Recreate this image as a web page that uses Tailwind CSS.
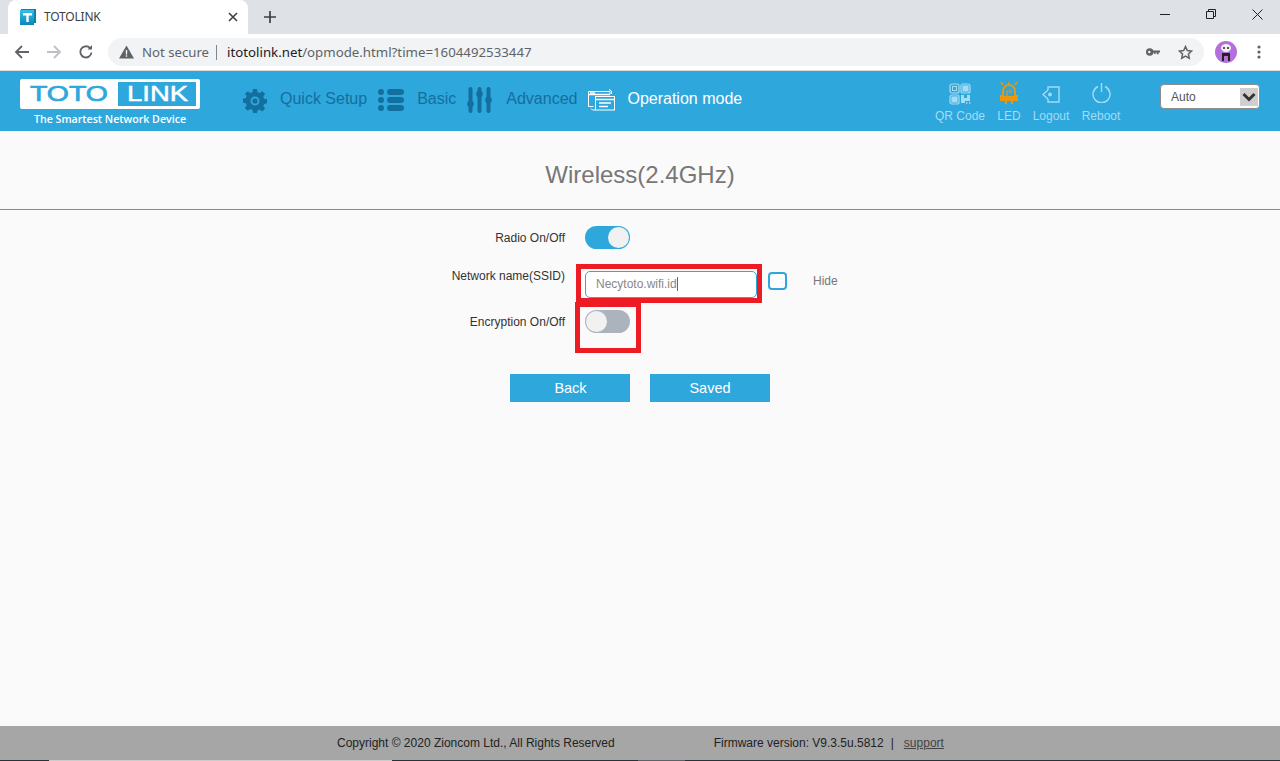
<!DOCTYPE html>
<html lang="en">
<head>
    <meta charset="UTF-8">
    <meta name="viewport" content="width=device-width, initial-scale=1.0">
    <title>TOTOLINK</title>
    <script src="https://cdn.jsdelivr.net/npm/@tailwindcss/browser@4"></script>
</head>
<body class="w-[1280px] h-[761px] overflow-hidden flex flex-col bg-[#fafafa] font-['Liberation_Sans',sans-serif]">

    <!-- browser tab strip -->
    <div class="h-[34px] bg-[#dee1e6] flex items-end pl-2 font-['Noto_Sans',sans-serif]">
        <div class="w-[240px] h-[34px] bg-white rounded-t-lg flex items-center pl-3 pr-[10px]">
            <svg class="w-4 h-4" viewBox="0 0 16 16">
                <defs><linearGradient id="fav" x1="0" y1="0" x2="0" y2="1"><stop offset="0" stop-color="#35c0e8"/><stop offset="1" stop-color="#0b86b8"/></linearGradient></defs>
                <rect x="1" y="0" width="15" height="14" fill="#0c7fae"/>
                <rect x="0" y="1" width="14" height="15" fill="url(#fav)"/>
                <path d="M3 4h9v2.400H8.700V13H6.300V6.400H3z" fill="#fff"/>
            </svg>
            <span class="ml-2 text-[12px] text-[#3c4043] tracking-[-0.2px]">TOTOLINK</span>
            <svg class="w-[10px] h-[10px] ml-auto" viewBox="0 0 10 10" stroke="#3c4043" stroke-width="1.6"><path d="M1 1l8 8M9 1l-8 8"/></svg>
        </div>
        <svg class="w-3 h-3 ml-[16px] mb-[11px]" viewBox="0 0 12 12" stroke="#3c4043" stroke-width="1.7"><path d="M6 0v12M0 6h12"/></svg>
        <div class="ml-auto flex items-center h-[34px] mb-[3px]">
            <svg class="w-[10px] h-[10px] mr-[36px]" viewBox="0 0 10 10" stroke="#202124"><path d="M0 5.5h10"/></svg>
            <svg class="w-[10px] h-[10px] mr-[36px]" viewBox="0 0 10 10" fill="none" stroke="#202124"><path d="M2.5 2.5V.5h7v7h-2M.5 2.5h7v7h-7z"/></svg>
            <svg class="w-[11px] h-[11px] mr-[17px]" viewBox="0 0 11 11" stroke="#202124"><path d="M.5.5l10 10M10.500 .5l-10 10"/></svg>
        </div>
    </div>

    <!-- browser address bar -->
    <div class="h-[37px] bg-white flex items-center font-['Noto_Sans',sans-serif] border-b border-[#dadce0]">
        <svg class="w-4 h-4 ml-[14px]" viewBox="0 0 16 16" fill="none" stroke="#5f6368" stroke-width="1.800"><path d="M15 8H2M8 2L2 8l6 6"/></svg>
        <svg class="w-4 h-4 ml-4" viewBox="0 0 16 16" fill="none" stroke="#bdc1c6" stroke-width="1.800"><path d="M1 8h13M8 2l6 6-6 6"/></svg>
        <svg class="w-4 h-4 ml-4" viewBox="0 0 16 16" fill="none" stroke="#5f6368" stroke-width="1.800"><path d="M13.500 8.500A5.600 5.600 0 1 1 12 4"/><path d="M14 1v4.500H9.500" fill="#5f6368" stroke="none"/></svg>
        <div class="ml-[14px] w-[1096px] h-7 rounded-full bg-[#f1f3f4] flex items-center pl-[11px] pr-[11px]">
            <svg class="w-[15px] h-[14px]" viewBox="0 0 15 14"><path d="M7.500 .5L15 13.500H0z" fill="#5f6368"/><path d="M6.800 5h1.400v4.500H6.800zM6.800 10.300h1.400v1.400H6.800z" fill="#f1f3f4"/></svg>
            <span class="ml-[8px] mt-px text-[13.200px] text-[#5f6368]">Not secure</span>
            <span class="ml-[7px] w-px h-[15px] bg-[#80868b]"></span>
            <span class="ml-[10px] mt-px text-[13.250px] text-[#202124]">itotolink.net<span class="text-[#5f6368]">/opmode.html?time=1604492533447</span></span>
            <svg class="w-[14px] h-2 ml-auto" viewBox="0 0 15 8" fill="#5f6368"><circle cx="4" cy="4" r="4"/><path d="M6 2.500h9v2h-1.500v2h-2v-2h-1v1.500h-2V4.500H6z"/><circle cx="3.500" cy="4" r="1.300" fill="#f1f3f4"/></svg>
            <svg class="w-[15px] h-[15px] ml-[18px]" viewBox="0 0 24 24" fill="none" stroke="#5f6368" stroke-width="2.400"><path d="M12 2.500l2.900 6.300 6.800.8-5 4.700 1.300 6.800-6-3.400-6 3.400 1.300-6.800-5-4.700 6.800-.8z"/></svg>
        </div>
        <div class="ml-[11px] w-[22px] h-[22px] rounded-full bg-[#b36fdc] flex items-center justify-center overflow-hidden">
            <svg class="w-[14px] h-[18px]" viewBox="0 0 14 18"><ellipse cx="7" cy="5" rx="5" ry="4" fill="#f1f1f1"/><circle cx="5" cy="5" r="1" fill="#222"/><circle cx="9" cy="5" r="1" fill="#222"/><path d="M3 10h8v8H9v-5H5v5H3z" fill="#222"/></svg>
        </div>
        <svg class="w-1 h-[14px] ml-[20px]" viewBox="0 0 4 14" fill="#5f6368"><circle cx="2" cy="2" r="1.600"/><circle cx="2" cy="7" r="1.600"/><circle cx="2" cy="12" r="1.600"/></svg>
    </div>

    <!-- router header -->
    <header class="h-[60px] bg-[#2ea7dd] flex shrink-0">
        <div class="w-[180px] ml-5 mt-[8px] flex flex-col">
            <svg class="w-[180px] h-[30px]" viewBox="0 0 180 30">
                <rect width="180" height="30" rx="2" fill="#fff"/>
                <text x="10" y="22" font-family="Liberation Sans" font-size="22" fill="#2ea7dd" stroke="#2ea7dd" stroke-width="0.700" textLength="78" lengthAdjust="spacingAndGlyphs">TOTO</text>
                <rect x="98" y="3" width="78" height="24" fill="#2ea7dd"/>
                <text x="107" y="22" font-family="Liberation Sans" font-size="22" fill="#fff" stroke="#fff" stroke-width="0.500" textLength="61" lengthAdjust="spacingAndGlyphs">LINK</text>
            </svg>
            <span class="text-center font-['Open_Sans',sans-serif] text-[10.650px] font-semibold text-white leading-[20px]">The Smartest Network Device</span>
        </div>

        <!-- main menu -->
        <nav class="ml-[43px] flex items-center h-[56px] text-[16px] text-[#136f9e]">
            <svg class="w-[24px] h-[24px] mt-[4px]" viewBox="0 0 24 24" fill="#136f9e">
                <path fill-rule="evenodd" d="M10 0h4l.6 3.200 2 .8L19.300 2.200l2.800 2.800-1.800 2.700.8 2 3.200.6v4l-3.200.6-.8 2 1.800 2.700-2.800 2.800-2.700-1.800-2 .8L14 24h-4l-.6-3.200-2-.8-2.700 1.800L1.900 19l1.800-2.700-.8-2L0 13.700v-4l2.900-.6.8-2L1.900 5l2.800-2.800L7.400 4l2-.8zM12 7.500a4.500 4.500 0 1 0 0 9 4.500 4.500 0 0 0 0-9z"/>
                <circle cx="12" cy="12" r="2.600"/>
            </svg>
            <span class="ml-[13px]">Quick Setup</span>
            <svg class="w-[26px] h-[24px] ml-[11px] mt-[1px]" viewBox="0 0 26 24" fill="#136f9e">
                <circle cx="3" cy="4" r="3"/><circle cx="3" cy="12" r="3"/><circle cx="3" cy="20" r="3"/>
                <rect x="9" y="1" width="17" height="6" rx="3"/><rect x="9" y="9" width="17" height="6" rx="3"/><rect x="9" y="17" width="17" height="6" rx="3"/>
            </svg>
            <span class="ml-[13px]">Basic</span>
            <svg class="w-[25px] h-[26px] ml-[11px] mt-[1px]" viewBox="0 0 25 26" fill="#136f9e">
                <rect x="1.500" y="0" width="4" height="26" rx="2"/><rect x="10.500" y="0" width="4" height="26" rx="2"/><rect x="19.500" y="0" width="4" height="26" rx="2"/>
                <circle cx="3.500" cy="17" r="3.300"/><circle cx="12.500" cy="7" r="3.300"/><circle cx="21.500" cy="13" r="3.300"/>
            </svg>
            <span class="ml-[14px]">Advanced</span>
            <svg class="w-[27px] h-[22px] ml-[11px] mt-[1px]" viewBox="0 0 27 22" fill="none" stroke="#fff">
                <path d="M22 5.500V2.500H.5v15h5"/>
                <path d="M.5 5.500H22" stroke-width="1.500"/>
                <rect x="7.500" y="7.500" width="19" height="13.500" fill="#2ea7dd"/>
                <path d="M7.500 10.500h19" stroke-width="1.500"/>
                <path d="M11 14h12M11 17.500h9" stroke-width="1.500"/>
                <path d="M2 4h5" stroke-width="1.500"/>
                <path d="M3 19.500l1.500 1.500h3" />
                <path d="M21 .5l2.500 1.500v3" />
            </svg>
            <span class="ml-[12px] text-white">Operation mode</span>
        </nav>

        <!-- tool icons -->
        <div class="ml-auto flex text-[12px] text-[#a3dcf5] mt-[12px] leading-[14px] whitespace-nowrap">
            <div class="flex flex-col items-center w-[52px]">
                <svg class="w-[22px] h-[22px]" viewBox="0 0 22 22" fill="none" stroke="#a3dcf5" stroke-width="1.200">
                    <rect x="1" y="1" width="9" height="9" rx="2"/><rect x="12" y="1" width="9" height="9" rx="2"/><rect x="1" y="12" width="9" height="9" rx="2"/>
                    <rect x="3.500" y="3.500" width="4" height="4" stroke-width="1"/>
                    <rect x="14" y="3" width="5" height="5" fill="#a3dcf5"/>
                    <rect x="3" y="14" width="5" height="5" fill="#a3dcf5"/>
                    <path d="M12 12h3v3h3v-3h3v6h-5v2h-4z" fill="#a3dcf5" stroke="none"/>
                    <path d="M17 20h1.500M20 20h1.500" stroke-width="1.500"/>
                </svg>
                <span class="mt-[4px]">QR Code</span>
            </div>
            <div class="flex flex-col items-center w-[46px]">
                <svg class="w-[18px] h-[22px] -mt-[1px] mb-[1px]" viewBox="0 0 18 22" fill="#e8970f" stroke="#e8970f">
                    <path d="M1 0l2 3M17 0l-2 3M9 0v2" stroke-width="1.500"/>
                    <path d="M3 14V9a6 6 0 0 1 12 0v5h2v4H1v-4z" fill="none" stroke-width="2"/>
                    <path d="M0 14h18v4H0z" stroke="none"/>
                    <path d="M5 18h2v4H5zM11 18h2v4h-2z" stroke="none"/>
                    <path d="M7 14V9h4v2" fill="none" stroke-width="1.200"/>
                </svg>
                <span class="mt-[4px]">LED</span>
            </div>
            <div class="flex flex-col items-center w-[38px]">
                <svg class="w-[18px] h-[17px] mt-[3px] mb-[2px]" viewBox="0 0 18 17" fill="none" stroke="#a3dcf5" stroke-width="1.400">
                    <path d="M6 4V1h11v15H6v-3"/>
                    <path d="M6 4L1 8.500 6 13"/>
                    <circle cx="8" cy="8.500" r="1.200" fill="#a3dcf5"/>
                </svg>
                <span class="mt-[4px]">Logout</span>
            </div>
            <div class="flex flex-col items-center w-[62px] mr-[28px]">
                <svg class="w-[19px] h-[20px] mb-[2px]" viewBox="0 0 19 20" fill="none" stroke="#a3dcf5" stroke-width="1.400">
                    <path d="M6 3.500a8.500 8.500 0 1 0 7 0"/>
                    <path d="M9.500 0v9"/>
                </svg>
                <span class="mt-[4px]">Reboot</span>
            </div>
        </div>

        <!-- language select -->
        <div class="w-[100px] h-[25px] mt-[13px] mr-[20px] rounded-[4px] border border-[#8d8d8d] bg-white flex items-center text-[12px] text-[#555] pl-[10px] overflow-hidden">
            Auto
            <span class="ml-auto mr-px w-[18px] h-[18px] bg-[#cfcfcf] flex items-center justify-center">
                <svg class="w-[14px] h-[10px]" viewBox="0 0 14 10" fill="none" stroke="#333" stroke-width="3"><path d="M1.500 2l5.500 5.500L12.500 2"/></svg>
            </span>
        </div>
    </header>

    <!-- page title -->
    <div class="h-[79px] shrink-0 border-b border-[#8a8a8a] flex items-center justify-center text-[24px] text-[#777] pt-[9px]">
        Wireless(2.4GHz)
    </div>

    <!-- form -->
    <main class="flex-1 flex flex-col">
        <div class="flex mt-[16px] h-[23px] items-center">
            <span class="w-[565px] text-right text-[12px] text-[#333]">Radio On/Off</span>
            <span class="ml-[20px] w-[45px] h-[23px] rounded-full bg-[#2ea7dd] flex justify-end items-center px-[1px]">
                <span class="w-[21px] h-[21px] rounded-full bg-[#f1f1f1]"></span>
            </span>
        </div>

        <div class="flex mt-[15px] h-[38px] items-start">
            <span class="w-[565px] text-right text-[12px] text-[#333] mt-[5px] leading-[14px]">Network name(SSID)</span>
            <div class="ml-[11px] w-[186px] h-[39px] border-[5px] border-[#ed1c24] bg-white px-[4px] pt-[2px]">
                <div class="w-[172px] h-[27px] rounded-[5px] border border-[#2ea7dd] bg-white flex items-center pl-[10px] pb-[2px] text-[12px] text-[#888]">
                    Necytoto.wifi.id<span class="w-px h-[14px] bg-[#666]"></span>
                </div>
            </div>
            <span class="ml-[6px] mt-[8px] w-[19px] h-[18px] rounded-[4px] border-2 border-[#2ea7dd] bg-white"></span>
            <span class="ml-[26px] mt-[10px] text-[12px] text-[#777] leading-[14px]">Hide</span>
        </div>

        <div class="flex h-[51px] items-start">
            <span class="w-[565px] text-right text-[12px] text-[#333] mt-[13px] leading-[14px]">Encryption On/Off</span>
            <div class="ml-[10px] w-[66px] h-[51px] border-[5px] border-[#ed1c24] pl-[5px] pt-[3px]">
                <span class="w-[45px] h-[23px] rounded-full bg-[#abb4bd] flex items-center px-[1px]">
                    <span class="w-[21px] h-[21px] rounded-full bg-[#f1f1f1]"></span>
                </span>
            </div>
        </div>

        <div class="flex justify-center gap-5 mt-[21px]">
            <button class="w-[120px] h-7 bg-[#2ea7dd] text-white text-[14.500px] pl-px pt-px">Back</button>
            <button class="w-[120px] h-7 bg-[#2ea7dd] text-white text-[14.500px] pt-px">Saved</button>
        </div>
    </main>

    <!-- footer -->
    <footer class="h-[34px] shrink-0 bg-[#a6a6a6] flex items-center text-[12px] text-[#222] pl-[337px] pb-px">
        <span>Copyright © 2020 Zioncom Ltd., All Rights Reserved</span>
        <span class="ml-[99px]">Firmware version: V9.3.5u.5812</span>
        <span class="ml-[7px]">|</span>
        <span class="ml-[10px] underline text-[#444]">support</span>
    </footer>

    <!-- sliver of the desktop taskbar under the window -->
    <div class="h-px shrink-0 flex bg-[#283337]">
        <span class="w-[49px]"></span>
        <span class="w-[343px] bg-[#cccccc]"></span>
        <span class="w-[246px]"></span>
        <span class="w-[47px] bg-[#5b6366]"></span>
    </div>
</body>
</html>
